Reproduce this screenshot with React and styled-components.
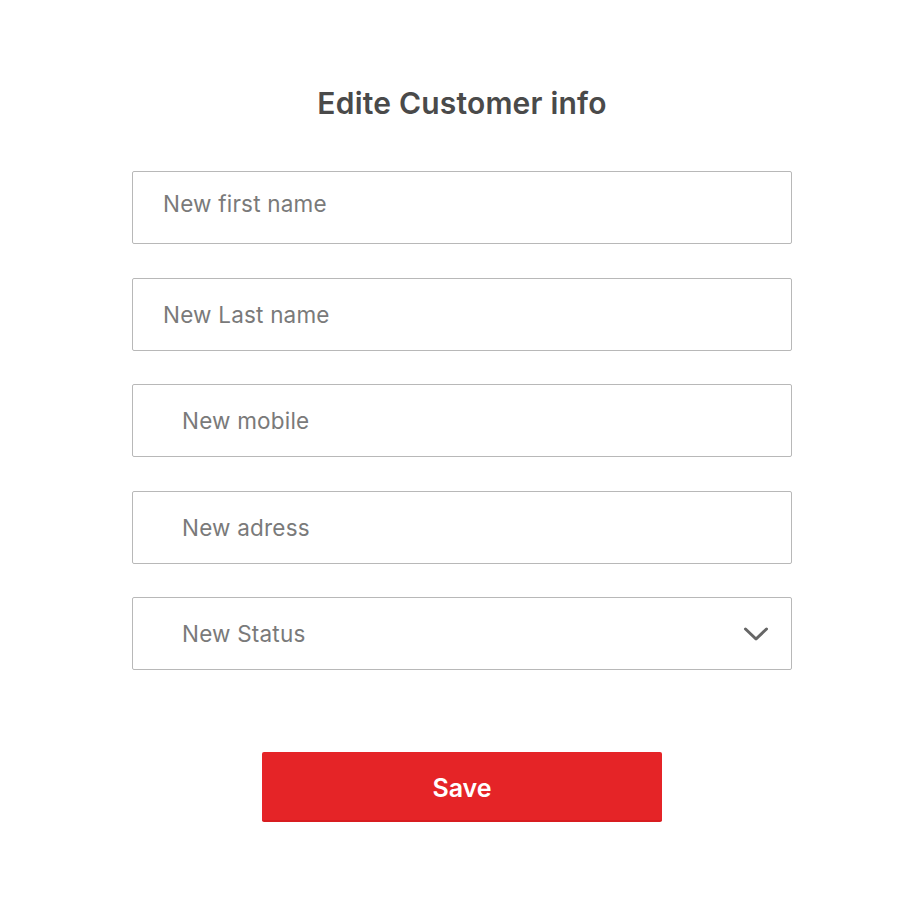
import React from "react";
import styled, { createGlobalStyle } from "styled-components";

const GlobalStyle = createGlobalStyle`
  body {
    margin: 0;
    background: #fff;
    font-family: Inter, "Noto Sans", sans-serif;
  }
`;

const Page = styled.main`
  display: flex;
  flex-direction: column;
  align-items: center;
  padding-top: 85px;
`;

const Title = styled.h1`
  margin: 0 0 50px;
  font-size: 30px;
  line-height: 36px;
  font-weight: 600;
  color: #4a4a4a;
  letter-spacing: 0.2px;
`;

const Form = styled.form`
  width: 660px;
  display: flex;
  flex-direction: column;
  gap: 33.5px;
`;

const Field = styled.div`
  height: 73px;
  box-sizing: border-box;
  border: 1px solid #b8b8b8;
  border-radius: 2px;
  display: flex;
  align-items: center;
  padding-left: ${(p) => (p.$indent ? "49px" : "30px")};
  padding-right: 22px;
  padding-bottom: ${(p) => (p.$raised ? "8px" : "0")};
`;

const Input = styled.input`
  flex: 1;
  border: 0;
  outline: 0;
  background: transparent;
  font-family: inherit;
  font-size: 22.5px;
  color: #444;
  padding: 0;
  letter-spacing: 0.2px;
  &::placeholder {
    color: #7a7a7a;
  }
`;

const SelectText = styled.span`
  flex: 1;
  font-size: 22.5px;
  color: #7a7a7a;
  letter-spacing: 0.2px;
`;

const Chevron = styled.svg`
  width: 26px;
  height: 16px;
`;

const SaveButton = styled.button`
  margin-top: 48px;
  width: 400px;
  height: 70px;
  padding-top: 6px;
  border: 0;
  border-bottom: 2px solid #d81d20;
  border-radius: 2px;
  background: #e52427;
  color: #fff;
  font-family: inherit;
  font-size: 25px;
  font-weight: 600;
  cursor: pointer;
  align-self: center;
`;

export default function App() {
  return (
    <>
      <GlobalStyle />
      <Page>
        <Title>Edite Customer info</Title>
        <Form onSubmit={(e) => e.preventDefault()}>
          <Field $raised>
            <Input placeholder="New first name" />
          </Field>
          <Field>
            <Input placeholder="New Last name" />
          </Field>
          <Field $indent>
            <Input placeholder="New mobile" />
          </Field>
          <Field $indent>
            <Input placeholder="New adress" />
          </Field>
          <Field $indent>
            <SelectText>New Status</SelectText>
            <Chevron viewBox="0 0 26 16">
              <path
                d="M2.5 3 L13 13 L23.5 3"
                fill="none"
                stroke="#666"
                strokeWidth="3"
                strokeLinecap="round"
                strokeLinejoin="round"
              />
            </Chevron>
          </Field>
          <SaveButton type="submit">Save</SaveButton>
        </Form>
      </Page>
    </>
  );
}
